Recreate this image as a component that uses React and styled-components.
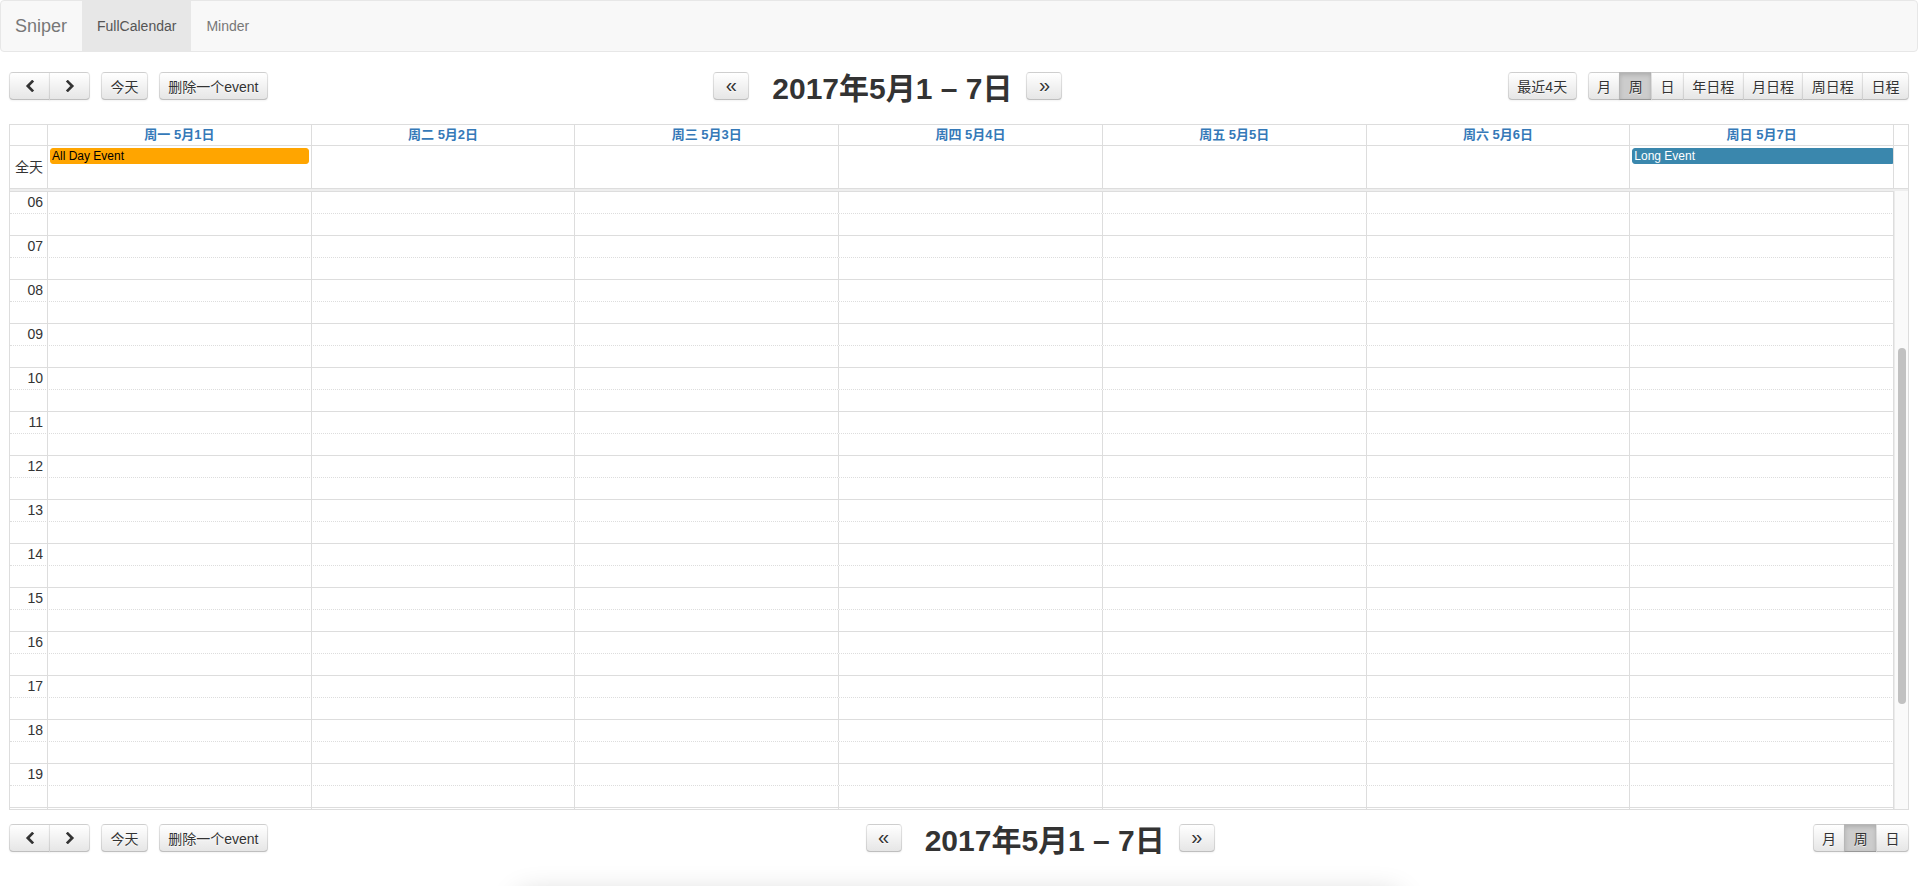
import React from 'react';
import styled, { createGlobalStyle, css } from 'styled-components';

const GlobalStyle = createGlobalStyle`
    html, body {
        margin: 0;
        padding: 0;
        overflow: hidden;
        background: #fff;
    }
    body {
        font-family: 'Liberation Sans', 'Noto Sans CJK SC', Arial, sans-serif;
        font-size: 14px;
        color: #333;
    }
    *, *::before, *::after {
        box-sizing: border-box;
    }
`;

const Navbar = styled.nav`
    display: flex;
    height: 52px;
    background: #f8f8f8;
    border: 1px solid #e7e7e7;
    border-radius: 4px;
`;

const Brand = styled.a`
    padding: 0 15px 0 14px;
    font-size: 18px;
    line-height: 50px;
    color: #777;
`;

const NavLink = styled.a`
    padding: 0 15px;
    line-height: 50px;
    font-size: 14px;
    color: ${props => (props.$active ? '#555' : '#777')};
    background: ${props => (props.$active ? '#e7e7e7' : 'transparent')};
`;

const Content = styled.div`
    padding: 0 9px;
`;

const Toolbar = styled.div`
    display: flex;
    align-items: flex-start;
    height: 33px;
    margin: ${props => (props.$footer ? '14px 0 0' : '20px 0 19px')};
`;

const ToolbarSide = styled.div`
    display: flex;
    gap: 11px;
`;

const ToolbarCenter = styled.div`
    flex: 1;
    display: flex;
    justify-content: center;
`;

const Title = styled.h2`
    margin: 0 14px 0 23px;
    height: 33px;
    font-size: 30px;
    line-height: 33px;
    font-weight: bold;
    color: #333;
    white-space: nowrap;
`;

const Button = styled.button`
    display: inline-flex;
    align-items: center;
    justify-content: center;
    height: 28px;
    padding: 0 0.6em;
    margin: 0;
    font-family: inherit;
    font-size: 14px;
    color: #333;
    white-space: nowrap;
    cursor: pointer;
    background: linear-gradient(#fff, #e6e6e6);
    border: 1px solid;
    border-color: rgba(0, 0, 0, 0.1) rgba(0, 0, 0, 0.1) rgba(0, 0, 0, 0.25);
    border-radius: 4px;
    box-shadow: inset 0 1px 0 rgba(255, 255, 255, 0.2), 0 1px 2px rgba(0, 0, 0, 0.05);
    text-shadow: 0 1px 1px rgba(255, 255, 255, 0.75);
    ${props =>
        props.$width &&
        css`
            width: ${props.$width}px;
            padding: 0;
        `}
    ${props =>
        props.$active &&
        css`
            background: #ccc;
            box-shadow: inset 0 2px 4px rgba(0, 0, 0, 0.15), 0 1px 2px rgba(0, 0, 0, 0.05);
        `}
`;

const ArrowGlyph = styled.span`
    font-size: 20px;
    line-height: 20px;
    margin-top: -2px;
`;

const ButtonGroup = styled.div`
    display: flex;
    > ${Button} {
        border-radius: 0;
        margin-left: -1px;
    }
    > ${Button}:first-child {
        margin-left: 0;
        border-radius: 4px 0 0 4px;
    }
    > ${Button}:last-child {
        border-radius: 0 4px 4px 0;
    }
`;

const Calendar = styled.div`
    border: 1px solid #ddd;
`;

const columns = '38px repeat(7, minmax(0, 1fr))';

const HeadRow = styled.div`
    display: grid;
    grid-template-columns: ${columns} 14px;
    height: ${props => props.$height}px;
    border-bottom: 1px solid #ddd;
`;

const Cell = styled.div`
    min-width: 0;
    border-right: 1px solid #ddd;
    &:last-child {
        border-right: 0;
    }
`;

const DayHeader = styled(Cell)`
    text-align: center;
    font-size: 13px;
    font-weight: bold;
    line-height: 20px;
    color: #3579b8;
`;

const AxisCell = styled(Cell)`
    display: flex;
    align-items: ${props => (props.$middle ? 'center' : 'flex-start')};
    justify-content: flex-end;
    padding-right: 4px;
    font-size: 14px;
    line-height: 20px;
    white-space: nowrap;
`;

const Divider = styled.div`
    height: 2px;
    background: #eee;
`;

const Event = styled.div`
    height: 16px;
    margin: 2px ${props => (props.$continues ? 0 : 2)}px 0 2px;
    padding-left: 1px;
    font-size: 12px;
    line-height: 14px;
    white-space: nowrap;
    overflow: hidden;
    color: ${props => props.$text};
    background: ${props => props.$color};
    border: 1px solid ${props => props.$color};
    border-radius: ${props => (props.$continues ? '3px 0 0 3px' : '3px')};
`;

const TimeBody = styled.div`
    display: flex;
    height: 618px;
`;

const SlotViewport = styled.div`
    flex: 1;
    min-width: 0;
    overflow: hidden;
`;

const SlotRow = styled.div`
    display: grid;
    grid-template-columns: ${columns};
    height: 22px;
    border-top: 1px ${props => (props.$minor ? 'dotted' : 'solid')} #ddd;
`;

const SlotCell = styled.div`
    border-right: 1px solid #ddd;
`;

const ScrollTrack = styled.div`
    position: relative;
    width: 14px;
    background: #fafafa;
    border-left: 1px solid #ebebeb;
`;

const ScrollThumb = styled.div`
    position: absolute;
    top: 157px;
    left: 3px;
    width: 8px;
    height: 356px;
    background: #c1c1c1;
    border-radius: 4px;
`;

const BottomSheet = styled.div`
    width: 880px;
    height: 120px;
    margin: 38px auto 0;
    background: #fff;
    border-radius: 6px;
    box-shadow: 0 0 30px rgba(0, 0, 0, 0.2);
`;

const days = ['周一 5月1日', '周二 5月2日', '周三 5月3日', '周四 5月4日', '周五 5月5日', '周六 5月6日', '周日 5月7日'];

// visible window of the time grid: 06:00 through 19:30, plus the 20:00 line at the bottom edge
const hours = Array.from({ length: 14 }, (_, i) => String(i + 6).padStart(2, '0'));

const Chevron = ({ dir }) => (
    <svg width='10' height='12' viewBox='0 0 10 12'>
        <path
            d={dir === 'left' ? 'M7.2 1.6 L2.8 6 L7.2 10.4' : 'M2.8 1.6 L7.2 6 L2.8 10.4'}
            fill='none'
            stroke='#333'
            strokeWidth='2.7'
            strokeLinecap='square'
        />
    </svg>
);

const EmptySlots = () => days.map(day => <SlotCell key={day} />);

const LeftTools = () => (
    <ToolbarSide>
        <ButtonGroup>
            <Button $width={41}>
                <Chevron dir='left' />
            </Button>
            <Button $width={41}>
                <Chevron dir='right' />
            </Button>
        </ButtonGroup>
        <Button>今天</Button>
        <Button>删除一个event</Button>
    </ToolbarSide>
);

const TitleBlock = () => (
    <ToolbarCenter>
        <Button $width={36}>
            <ArrowGlyph>«</ArrowGlyph>
        </Button>
        <Title>2017年5月1 – 7日</Title>
        <Button $width={36}>
            <ArrowGlyph>»</ArrowGlyph>
        </Button>
    </ToolbarCenter>
);

const App = () => (
    <>
        <GlobalStyle />
        <Navbar>
            <Brand>Sniper</Brand>
            <NavLink $active>FullCalendar</NavLink>
            <NavLink>Minder</NavLink>
        </Navbar>
        <Content>
            <Toolbar>
                <LeftTools />
                <TitleBlock />
                <ToolbarSide>
                    <Button>最近4天</Button>
                    <ButtonGroup>
                        <Button>月</Button>
                        <Button $active>周</Button>
                        <Button>日</Button>
                        <Button>年日程</Button>
                        <Button>月日程</Button>
                        <Button>周日程</Button>
                        <Button>日程</Button>
                    </ButtonGroup>
                </ToolbarSide>
            </Toolbar>

            <Calendar>
                <HeadRow $height={21}>
                    <Cell />
                    {days.map(day => (
                        <DayHeader key={day}>{day}</DayHeader>
                    ))}
                    <Cell />
                </HeadRow>
                <HeadRow $height={43}>
                    <AxisCell $middle>全天</AxisCell>
                    {days.map((day, idx) => (
                        <Cell key={day}>
                            {idx === 0 && (
                                <Event $color='#ffa500' $text='#000'>
                                    All Day Event
                                </Event>
                            )}
                            {idx === 6 && (
                                <Event $color='#3a87ad' $text='#fff' $continues>
                                    Long Event
                                </Event>
                            )}
                        </Cell>
                    ))}
                    <Cell />
                </HeadRow>
                <Divider />
                <TimeBody>
                    <SlotViewport>
                        {hours.map(hour => (
                            <React.Fragment key={hour}>
                                <SlotRow>
                                    <AxisCell>{hour}</AxisCell>
                                    <EmptySlots />
                                </SlotRow>
                                <SlotRow $minor>
                                    <SlotCell />
                                    <EmptySlots />
                                </SlotRow>
                            </React.Fragment>
                        ))}
                        <SlotRow>
                            <SlotCell />
                            <EmptySlots />
                        </SlotRow>
                    </SlotViewport>
                    <ScrollTrack>
                        <ScrollThumb />
                    </ScrollTrack>
                </TimeBody>
            </Calendar>

            <Toolbar $footer>
                <LeftTools />
                <TitleBlock />
                <ToolbarSide>
                    <ButtonGroup>
                        <Button>月</Button>
                        <Button $active>周</Button>
                        <Button>日</Button>
                    </ButtonGroup>
                </ToolbarSide>
            </Toolbar>
            <BottomSheet />
        </Content>
    </>
);

export default App;
